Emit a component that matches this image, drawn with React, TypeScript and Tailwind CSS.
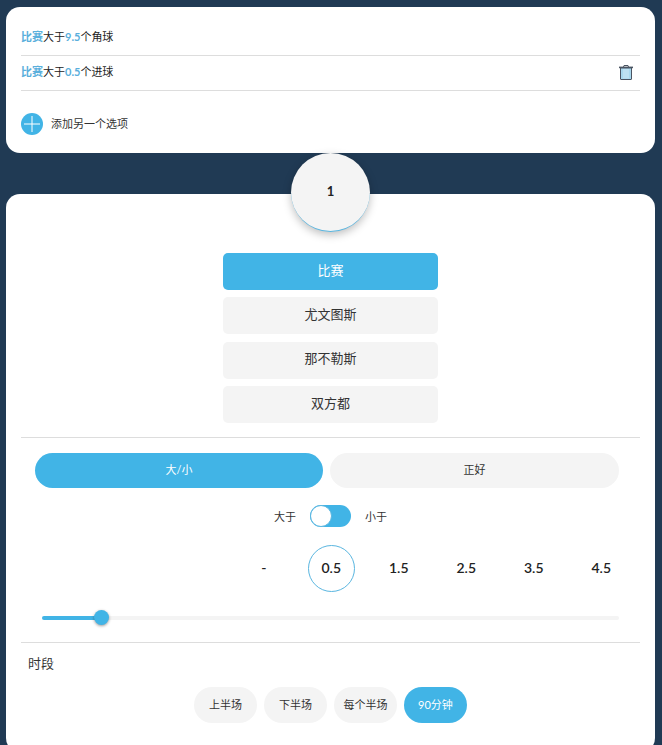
// Bet builder panel
import React from 'react';

const FONT = "font-['Lato','Noto_Sans_CJK_SC',sans-serif]";

function TrashIcon() {
  return (
    <svg width="14" height="15" viewBox="0 0 14 15" className="block">
      <path d="M4.5 2 L5 0.5 H9 L9.5 2" fill="none" stroke="#4b5563" strokeWidth="1" />
      <rect x="0" y="1.6" width="14" height="1.6" fill="#4b5563" />
      <path d="M1.5 3 H12.5 V14 Q12.5 14.5 12 14.5 H2 Q1.5 14.5 1.5 14 Z" fill="#a9d8ee" stroke="#4b5563" strokeWidth="1" />
      <path d="M5 4 V13.5 M7 4 V13.5 M9 4 V13.5" stroke="#ddf0f8" strokeWidth="0.8" />
    </svg>
  );
}

function BetRow({ value, market, trash }: { value: string; market: string; trash?: boolean }) {
  return (
    <div className="flex h-[35px] items-center justify-between border-b border-[#dddddd] pb-[1px] text-[11px]">
      <span className="text-[#222222]">
        <b className="font-bold text-[#5aafdc]">比赛</b>大于<b className="font-bold text-[#5aafdc]">{value}</b>个{market}
      </span>
      {trash && <span className="mr-[7px]"><TrashIcon /></span>}
    </div>
  );
}

const teams = ['比赛', '尤文图斯', '那不勒斯', '双方都'];
const lines = ['-', '0.5', '1.5', '2.5', '3.5', '4.5'];
const periods = ['上半场', '下半场', '每个半场', '90分钟'];

export default function App() {
  return (
    <div className={`${FONT} relative h-[745px] overflow-hidden bg-[#203a54] pl-[6px] pr-[7px] pt-[7px]`}>
      {/* Selected bets */}
      <div className="h-[146px] rounded-[14px] bg-white px-[15px] pt-[14px]">
        <BetRow value="9.5" market="角球" />
        <BetRow value="0.5" market="进球" trash />
        <div className="mt-[22px] flex items-center gap-[8px]">
          <span className="flex h-[22px] w-[22px] items-center justify-center rounded-full bg-[#41b4e6]">
            <svg width="16" height="16" viewBox="0 0 16 16">
              <path d="M8 0 V16 M0 8 H16" stroke="#ffffff" strokeWidth="1" />
            </svg>
          </span>
          <span className="text-[11px] text-[#333333]">添加另一个选项</span>
        </div>
      </div>

      {/* Step badge */}
      <div className="absolute left-[291px] top-[153px] z-10 flex h-[79px] w-[79px] items-center justify-center rounded-full border-b border-[#5ab6e0] bg-[#f4f4f4] text-[13px] font-bold text-[#222222] shadow-[0_3px_8px_rgba(0,0,0,0.25)]">
        1
      </div>

      {/* Builder */}
      <div className="mt-[41px] h-[558px] rounded-[14px] bg-white px-[15px] pt-[59px]">
        <div className="flex flex-col items-center gap-[7.3px]">
          {teams.map((team, i) => (
            <div
              key={team}
              className={`flex h-[37px] w-[215px] items-center justify-center rounded-[5px] pb-[2px] text-[13px] ${
                i === 0 ? 'bg-[#41b4e6] text-white' : 'bg-[#f4f4f4] text-[#333333]'
              }`}
            >
              {team}
            </div>
          ))}
        </div>

        <div className="mt-[14px] border-t border-[#dddddd] pt-[15px]">
          <div className="flex gap-[7px] pl-[14px] pr-[21px]">
            <div className="flex h-[35px] w-[288px] items-center justify-center rounded-full bg-[#41b4e6] text-[11px] text-white">大/小</div>
            <div className="flex h-[35px] flex-1 items-center justify-center rounded-full bg-[#f4f4f4] text-[11px] text-[#333333]">正好</div>
          </div>

          <div className="mt-[17px] flex items-center justify-center gap-[14px] text-[11px] text-[#333333]">
            <span className="pt-[2px]">大于</span>
            <span className="flex h-[22px] w-[41px] items-center rounded-full bg-[#41b4e6]">
              <span className="h-[22px] w-[22px] rounded-full border border-[#5ab6e0] bg-white" />
            </span>
            <span className="pt-[2px]">小于</span>
          </div>

          <div className="mt-[18px] flex justify-end pr-[5px]">
            {lines.map((line) => (
              <div key={line} className="flex h-[47px] w-[67.5px] items-center justify-center text-[14px] font-semibold text-[#222222]">
                {line === '0.5' ? (
                  <span className="flex h-[47px] w-[47px] items-center justify-center rounded-full border border-[#5ab6e0] pb-[1px]">{line}</span>
                ) : (
                  <span className="pb-[1px]">{line}</span>
                )}
              </div>
            ))}
          </div>

          {/* Slider */}
          <div className="relative mx-[21px] mt-[24px] h-[4px] rounded-full bg-[#f4f4f4]">
            <div className="h-[4px] w-[59px] rounded-full bg-[#41b4e6]" />
            <div className="absolute left-[51.5px] top-[-5.5px] h-[15px] w-[15px] rounded-full bg-[#41b4e6] shadow-[0_1px_3px_rgba(0,0,0,0.4)]" />
          </div>
        </div>

        <div className="mt-[22px] border-t border-[#dddddd] pl-[7px] pt-[11px] text-[13px] leading-[18px] text-[#333333]">时段</div>

        <div className="mt-[15px] flex justify-center gap-[7px]">
          {periods.map((period, i) => (
            <div
              key={period}
              className={`flex h-[36px] w-[63px] items-center justify-center rounded-full text-[11px] ${
                i === 3 ? 'bg-[#41b4e6] text-white' : 'bg-[#f4f4f4] text-[#333333]'
              }`}
            >
              {period}
            </div>
          ))}
        </div>
      </div>
    </div>
  );
}
